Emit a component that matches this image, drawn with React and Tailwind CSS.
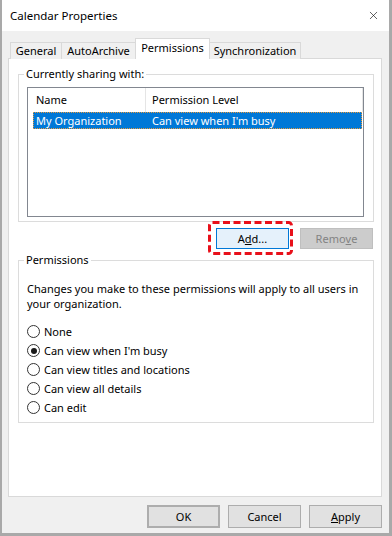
import { X } from "lucide-react";

const font = { fontFamily: '"Noto Sans", "Segoe UI", Arial, sans-serif' };

const tabs = [
  { label: "General", w: "w-[52px]" },
  { label: "AutoArchive", w: "w-[75px]" },
  { label: "Permissions", w: "w-[75px]", active: true },
  { label: "Synchronization", w: "w-[92px]" },
];

const radios = [
  "None",
  "Can view when I'm busy",
  "Can view titles and locations",
  "Can view all details",
  "Can edit",
];

const Radio = ({ checked, label }) => (
  <div className="flex items-center h-[19px]">
    <span className="w-[13px] h-[13px] rounded-full border border-[#333333] bg-white flex items-center justify-center">
      {checked && <span className="w-[6px] h-[6px] rounded-full bg-[#1a1a1a]" />}
    </span>
    <span className="ml-[4px]">{label}</span>
  </div>
);

const Button = ({ children, className = "" }) => (
  <button
    className={`w-[73px] h-[23px] flex items-center justify-center bg-[#e1e1e1] border border-[#adadad] text-black ${className}`}
  >
    {children}
  </button>
);

export default function App() {
  return (
    <div
      style={font}
      className="w-[392px] h-[536px] flex flex-col bg-[#f0f0f0] border-l-2 border-r-[3px] border-b-[3px] border-[#a9a9a9] text-[11px] leading-[16px] text-black overflow-hidden"
    >
      {/* title bar */}
      <div className="h-[31px] bg-white flex items-center justify-between pl-[8px] pr-[9px] shrink-0">
        <span className="text-[11.5px]">Calendar Properties</span>
        <X size={13} strokeWidth={1.2} className="text-[#111]" />
      </div>

      <div className="flex-1 flex flex-col pt-[7px] pl-[6px] pr-[7px] pb-[5px]">
        {/* tabs */}
        <div className="flex items-end pl-[2px] h-[21px] -mb-px relative z-10">
          {tabs.map((t, i) => (
            <div
              key={t.label}
              className={`${t.w} ${i > 0 ? "-ml-px" : ""} border border-[#d9d9d9] flex items-center justify-center ${
                t.active
                  ? "h-[21px] bg-white border-b-0 relative z-10 pb-[3px]"
                  : "h-[17px] bg-[#f0f0f0] border-b-0"
              }`}
            >
              {t.label}
            </div>
          ))}
        </div>

        {/* panel */}
        <div className="flex-1 min-w-0 bg-white border border-[#d9d9d9] pl-[9px] pr-[7px] pt-[7px]">
          <fieldset className="min-w-0 border border-[#dcdcdc] pl-[8px] pr-[9px] pb-[4px]">
            <legend className="-ml-[3px] px-[2px]">Currently sharing with:</legend>
            <div className="mt-[5px] h-[130px] border border-[#828790] bg-white">
              <div className="flex h-[24px] items-center">
                <div className="w-[118px] h-full flex items-center pl-[8px] border-r border-[#e5e5e5]">
                  Name
                </div>
                <div className="w-[217px] h-full flex items-center pl-[6px] border-r border-[#e5e5e5]">
                  Permission Level
                </div>
              </div>
              <div className="ml-[5px] mr-[1px] h-[17px] bg-[#0078d7] text-white flex items-center outline outline-1 outline-dotted outline-[#e79a3c] -outline-offset-1">
                <span className="w-[113px] pl-[3px]">My Organization</span>
                <span className="pl-[6px]">Can view when I'm busy</span>
              </div>
            </div>
          </fieldset>

          <div className="flex justify-end mt-[6px] pr-[1px]">
            <div className="relative">
              <button className="w-[73px] h-[21px] flex items-center justify-center bg-[#e5f1fb] border border-[#0078d7]">
                A<span className="underline">d</span>d...
              </button>
              <svg
                className="absolute -left-[8px] -top-[7px] pointer-events-none"
                width="85"
                height="34"
                viewBox="0 0 85 34"
              >
                <rect
                  x="1.5"
                  y="1.5"
                  width="82"
                  height="31"
                  rx="3"
                  fill="none"
                  stroke="#e8101a"
                  strokeWidth="3"
                  strokeDasharray="7 3.5"
                />
              </svg>
            </div>
            <button className="ml-[11px] w-[73px] h-[21px] flex items-center justify-center bg-[#cccccc] border border-[#bfbfbf] text-[#838383]">
              Remo<span className="underline">v</span>e
            </button>
          </div>

          <fieldset className="min-w-0 mt-[3px] border border-[#dcdcdc] pl-[8px] pb-[5px]">
            <legend className="-ml-[3px] px-[2px]">Permissions</legend>
            <p className="mt-[13px] leading-[15px] whitespace-nowrap">
              Changes you make to these permissions will apply to all users in
              <br />
              your organization.
            </p>
            <div className="mt-[11px] flex flex-col">
              {radios.map((r, i) => (
                <Radio key={r} label={r} checked={i === 1} />
              ))}
            </div>
          </fieldset>
        </div>

        {/* bottom buttons */}
        <div className="flex justify-end gap-[8px] mt-[8px]">
          <Button className="border-2 border-[#0078d7]">OK</Button>
          <Button>Cancel</Button>
          <Button>
            <span className="underline">A</span>pply
          </Button>
        </div>
      </div>
    </div>
  );
}
